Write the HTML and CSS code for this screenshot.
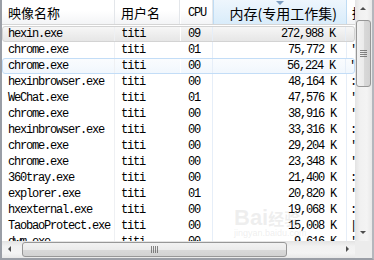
FILE: index.html
```html
<!DOCTYPE html>
<html lang="zh-CN">
<head>
    <meta charset="UTF-8">
    <title>进程</title>
    <link rel="stylesheet" href="styles.css">
</head>
<body>
    <div class="window">
        <div class="list">
            <div class="row head">
                <div class="cell name">映像名称</div>
                <div class="cell user">用户名</div>
                <div class="cell cpu mono">CPU</div>
                <div class="cell mem sorted"><span class="sort-arrow"></span>内存(专用工作集)</div>
                <div class="cell extra">描述</div>
            </div>
            <div class="rows">
                <div class="row selected">
                    <div class="cell name">hexin.exe</div><div class="cell user">titi</div><div class="cell cpu">09</div><div class="cell mem">272,988 K</div><div class="cell extra"></div>
                </div>
                <div class="row">
                    <div class="cell name">chrome.exe</div><div class="cell user">titi</div><div class="cell cpu">01</div><div class="cell mem">75,772 K</div><div class="cell extra">'</div>
                </div>
                <div class="row hover">
                    <div class="cell name">chrome.exe</div><div class="cell user">titi</div><div class="cell cpu">00</div><div class="cell mem">56,224 K</div><div class="cell extra">'</div>
                </div>
                <div class="row">
                    <div class="cell name">hexinbrowser.exe</div><div class="cell user">titi</div><div class="cell cpu">00</div><div class="cell mem">48,164 K</div><div class="cell extra">:</div>
                </div>
                <div class="row">
                    <div class="cell name">WeChat.exe</div><div class="cell user">titi</div><div class="cell cpu">01</div><div class="cell mem">47,576 K</div><div class="cell extra">'</div>
                </div>
                <div class="row">
                    <div class="cell name">chrome.exe</div><div class="cell user">titi</div><div class="cell cpu">00</div><div class="cell mem">38,916 K</div><div class="cell extra">'</div>
                </div>
                <div class="row">
                    <div class="cell name">hexinbrowser.exe</div><div class="cell user">titi</div><div class="cell cpu">00</div><div class="cell mem">33,316 K</div><div class="cell extra">:</div>
                </div>
                <div class="row">
                    <div class="cell name">chrome.exe</div><div class="cell user">titi</div><div class="cell cpu">00</div><div class="cell mem">29,204 K</div><div class="cell extra">'</div>
                </div>
                <div class="row">
                    <div class="cell name">chrome.exe</div><div class="cell user">titi</div><div class="cell cpu">00</div><div class="cell mem">23,348 K</div><div class="cell extra">'</div>
                </div>
                <div class="row">
                    <div class="cell name">360tray.exe</div><div class="cell user">titi</div><div class="cell cpu">00</div><div class="cell mem">21,400 K</div><div class="cell extra">:</div>
                </div>
                <div class="row">
                    <div class="cell name">explorer.exe</div><div class="cell user">titi</div><div class="cell cpu">01</div><div class="cell mem">20,820 K</div><div class="cell extra">'</div>
                </div>
                <div class="row">
                    <div class="cell name">hxexternal.exe</div><div class="cell user">titi</div><div class="cell cpu">00</div><div class="cell mem">19,068 K</div><div class="cell extra">:</div>
                </div>
                <div class="row">
                    <div class="cell name">TaobaoProtect.exe</div><div class="cell user">titi</div><div class="cell cpu">00</div><div class="cell mem">15,008 K</div><div class="cell extra">|</div>
                </div>
                <div class="row">
                    <div class="cell name">dwm.exe</div><div class="cell user">titi</div><div class="cell cpu">00</div><div class="cell mem">9,616 K</div><div class="cell extra">'</div>
                </div>
            </div>
            <div class="watermark">Bai<span>经验</span><small>jingyan.baidu.com</small></div>
        </div>

        <div class="vscroll">
            <div class="arrow up"></div>
            <div class="vtrack">
                <div class="thumb vthumb"><span class="grip"></span></div>
            </div>
            <div class="arrow down"></div>
        </div>

        <div class="hscroll">
            <div class="arrow left"></div>
            <div class="htrack">
                <div class="thumb hthumb"><span class="grip"></span></div>
            </div>
            <div class="arrow right"></div>
        </div>
        <div class="corner"></div>
    </div>
</body>
</html>
```

FILE: styles.css
```css
body {
    margin: 0;
    background-color: #fff;
}

.window {
    width: 370px;
    height: 258px;
    border-left: 2px solid #9a9ea6;
    border-right: 2px solid #b4b7bd;
    border-bottom: 2px solid #9a9ea6;
    display: grid;
    grid-template-columns: 353px 17px;
    grid-template-rows: 241px 17px;
    background-color: #fff;
}

/* List view */
.list {
    position: relative;
    overflow: hidden;
    font-family: 'Liberation Mono', 'DejaVu Sans Mono', monospace;
    font-size: 12px;
    letter-spacing: -1.2px;
    color: #000;
}

.row {
    display: flex;
    height: 16px;
    line-height: 16px;
    box-sizing: border-box;
}

.cell {
    white-space: nowrap;
    overflow: hidden;
    box-sizing: border-box;
}

.name {
    width: 113px;
    padding-left: 6px;
    border-right: 1px solid #eef0f3;
}

.user {
    width: 65px;
    padding-left: 6px;
}

.cpu {
    width: 33px;
    padding-left: 7px;
    border-left: 1px solid #fff;
    border-right: 1px solid #e6eef8;
}

.mem {
    width: 134px;
    text-align: right;
    padding-right: 10px;
    border-right: 1px solid #e6eef8;
}

.extra {
    width: 8px;
    padding-left: 3px;
}

/* Header */
.head {
    height: 25px;
    line-height: 16px;
    background: linear-gradient(#ffffff, #ffffff 45%, #f3f4f6);
    border-bottom: 1px solid #d5d5d5;
    font-family: 'Noto Sans CJK SC', 'DejaVu Sans', sans-serif;
    font-size: 13px;
    letter-spacing: 0;
}

.head .cell {
    padding-top: 5px;
    border-right: 1px solid #e3e6ea;
}

.head .mono {
    font-family: 'Liberation Mono', monospace;
    font-size: 12px;
    letter-spacing: -1.2px;
    padding-left: 7px;
}

.head .sorted {
    position: relative;
    background: linear-gradient(#eef6fd, #d9ecfa);
    border-left: 1px solid #bfdcf4;
    border-right: 1px solid #bfdcf4;
    text-align: right;
    padding-right: 9px;
    font-size: 14px;
}

.sort-arrow {
    position: absolute;
    top: 1px;
    left: 62px;
    width: 0;
    height: 0;
    border-left: 4px solid transparent;
    border-right: 4px solid transparent;
    border-top: 4px solid #7d9dc0;
}

.head .extra {
    border-right: none;
    padding-left: 5px;
}

.rows {
    padding-top: 1px;
}

.selected {
    background: linear-gradient(#f6f6f6, #e6e6e6);
    border: 1px solid #d3d3d3;
    border-radius: 3px;
    line-height: 14px;
}

.hover {
    background: linear-gradient(#fafcfe, #f1f7fd);
    border: 1px solid #c3ddf7;
    border-radius: 3px;
    line-height: 14px;
}

.selected .name,
.hover .name {
    padding-left: 5px;
}

.watermark {
    position: absolute;
    left: 232px;
    top: 208px;
    font-family: 'Liberation Sans', sans-serif;
    font-size: 22px;
    font-weight: bold;
    letter-spacing: 0;
    color: rgba(190, 190, 190, 0.25);
    line-height: 20px;
}

.watermark span {
    font-family: 'Noto Sans CJK SC', sans-serif;
    font-size: 16px;
}

.watermark small {
    display: block;
    font-size: 9px;
    font-weight: normal;
    line-height: 10px;
}

/* Scrollbars */
.vscroll {
    display: flex;
    flex-direction: column;
    background: linear-gradient(90deg, #e3e3e3, #f1f1f1 30%, #f4f4f4 70%, #e8e8e8);
}

.hscroll {
    display: flex;
    background: linear-gradient(#e3e3e3, #f1f1f1 30%, #f4f4f4 70%, #e8e8e8);
}

.corner {
    background-color: #ececec;
}

.arrow {
    width: 17px;
    height: 17px;
    flex: none;
    position: relative;
}

.arrow::after {
    content: '';
    position: absolute;
    width: 0;
    height: 0;
}

.up::after {
    left: 5px;
    top: 7px;
    border-left: 3px solid transparent;
    border-right: 3px solid transparent;
    border-bottom: 3px solid #4d4d4d;
}

.down::after {
    left: 5px;
    top: 7px;
    border-left: 3px solid transparent;
    border-right: 3px solid transparent;
    border-top: 3px solid #4d4d4d;
}

.left::after {
    left: 6px;
    top: 5px;
    border-top: 3px solid transparent;
    border-bottom: 3px solid transparent;
    border-right: 3px solid #4d4d4d;
}

.right::after {
    left: 8px;
    top: 5px;
    border-top: 3px solid transparent;
    border-bottom: 3px solid transparent;
    border-left: 3px solid #4d4d4d;
}

.vtrack {
    flex: 1;
    padding-top: 3px;
}

.htrack {
    flex: 1;
    padding-left: 3px;
    display: flex;
    align-items: center;
}

.thumb {
    box-sizing: border-box;
    border: 1px solid #979797;
    border-radius: 3px;
    display: flex;
    align-items: center;
    justify-content: center;
}

.vthumb {
    width: 15px;
    height: 67px;
    margin-left: 1px;
    background: linear-gradient(90deg, #f2f2f2, #ebebeb 50%, #d9d9d9 51%, #d2d2d2);
}

.hthumb {
    width: 265px;
    height: 15px;
    background: linear-gradient(#f2f2f2, #ebebeb 50%, #d9d9d9 51%, #d2d2d2);
}

.vthumb .grip {
    width: 7px;
    height: 7px;
    background: repeating-linear-gradient(#555 0 1px, transparent 1px 2px);
    opacity: 0.7;
}

.hthumb .grip {
    width: 7px;
    height: 7px;
    background: repeating-linear-gradient(90deg, #555 0 1px, transparent 1px 2px);
    opacity: 0.7;
}
```
